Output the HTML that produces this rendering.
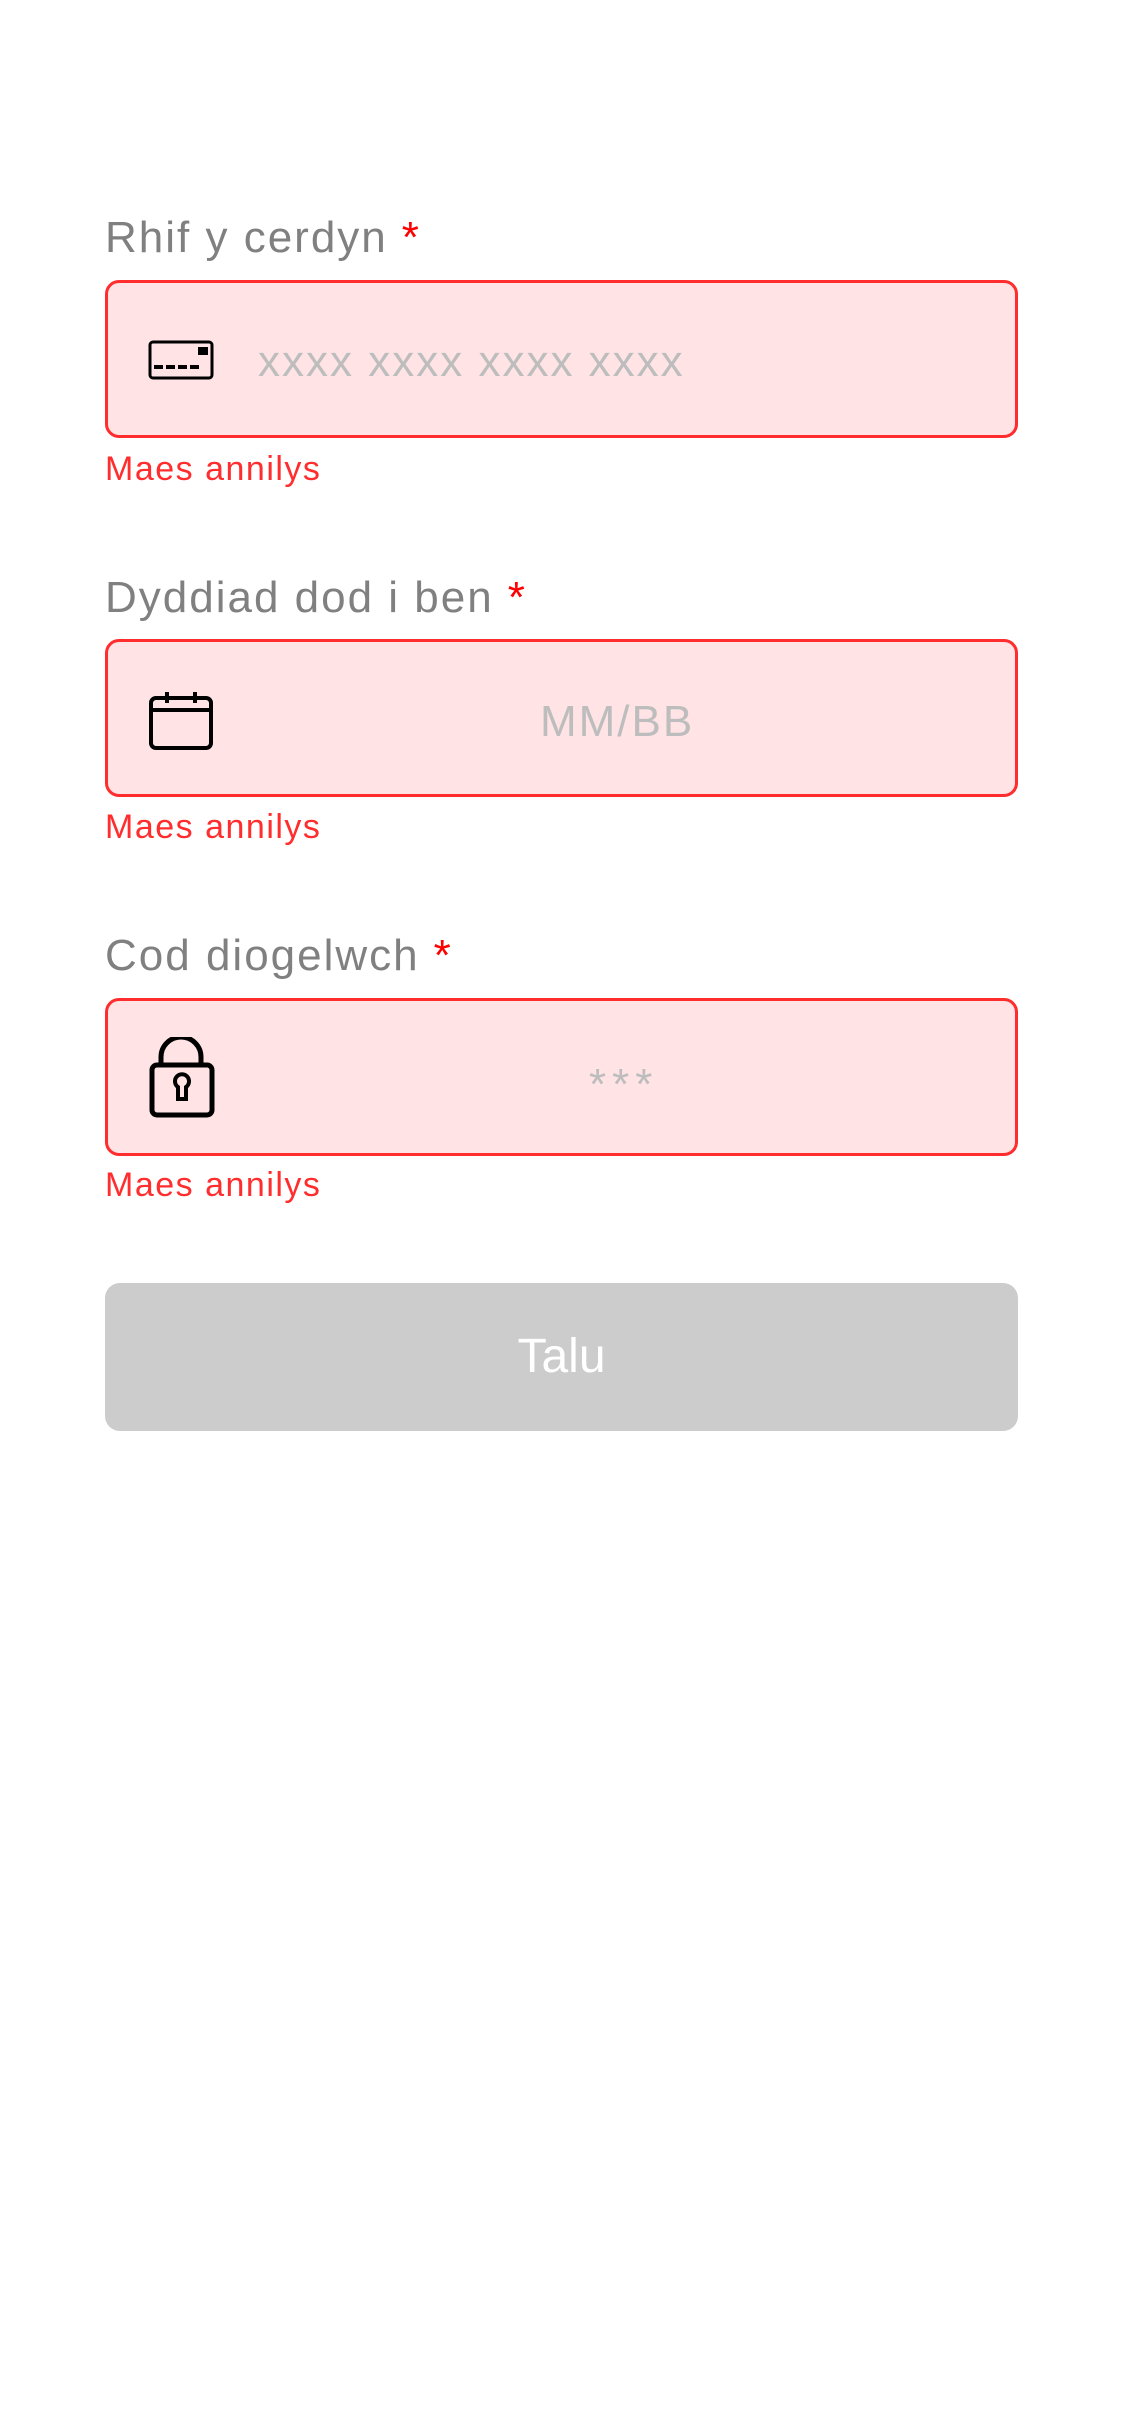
<!DOCTYPE html>
<html><head><meta charset="utf-8"><style>
body{margin:0;width:1125px;height:2436px;background:#fff;font-family:"Liberation Sans",sans-serif;position:relative;overflow:hidden}
.lbl{position:absolute;left:105px;font-size:44px;letter-spacing:2px;color:#808080;line-height:1}
.lbl span{color:#f00;margin-left:14px}
.box{position:absolute;left:105px;width:913px;height:158px;border:3px solid #ff2d2d;border-radius:14px;background:#ffe3e5;box-sizing:border-box}
.ph{position:absolute;font-size:44px;letter-spacing:2px;color:#bdbdbd;line-height:1}
.err{position:absolute;left:105px;font-size:34px;letter-spacing:1.5px;color:#ff2d2d;line-height:1}
.ic{position:absolute;left:40px}
.btn{position:absolute;left:105px;top:1283px;width:913px;height:148px;background:#cccccc;border-radius:15px;color:#fff;font-size:48px;text-align:center;line-height:148px}
</style></head><body>
<div class="lbl" style="top:216px">Rhif y cerdyn<span>*</span></div>
<div class="box" style="top:280px">
<svg class="ic" style="top:57px" width="66" height="40" viewBox="0 0 66 40"><rect x="2" y="2" width="62" height="36" rx="3" fill="none" stroke="#000" stroke-width="3"/><rect x="50" y="7" width="10" height="8" fill="#000"/><g fill="#000"><rect x="6" y="25" width="9" height="4"/><rect x="18" y="25" width="9" height="4"/><rect x="30" y="25" width="9" height="4"/><rect x="42" y="25" width="9" height="4"/></g></svg>
<div class="ph" style="left:150px;top:57px">xxxx xxxx xxxx xxxx</div>
</div>
<div class="err" style="top:452px">Maes annilys</div>

<div class="lbl" style="top:576px">Dyddiad dod i ben<span>*</span></div>
<div class="box" style="top:639px">
<svg class="ic" style="top:48px" width="66" height="62" viewBox="0 0 66 62"><rect x="3" y="8" width="60" height="50" rx="5" fill="none" stroke="#000" stroke-width="4"/><line x1="3" y1="20" x2="63" y2="20" stroke="#000" stroke-width="4"/><line x1="19" y1="2" x2="19" y2="13" stroke="#000" stroke-width="4"/><line x1="47" y1="2" x2="47" y2="13" stroke="#000" stroke-width="4"/></svg>
<div class="ph" style="left:432px;top:58px">MM/BB</div>
</div>
<div class="err" style="top:810px">Maes annilys</div>

<div class="lbl" style="top:934px">Cod diogelwch<span>*</span></div>
<div class="box" style="top:998px">
<svg class="ic" style="top:36px" width="68" height="82" viewBox="0 0 68 82"><path d="M13 28 V20 A20 20 0 0 1 53 20 V28" fill="none" stroke="#000" stroke-width="5"/><rect x="4" y="28" width="60" height="50" rx="5" fill="none" stroke="#000" stroke-width="5"/><path d="M30 62 V50 A7 7 0 1 1 38 50 V62 Z" fill="none" stroke="#000" stroke-width="4"/></svg>
<div class="ph" style="left:481px;top:62px;letter-spacing:6px">***</div>
</div>
<div class="err" style="top:1168px">Maes annilys</div>

<div class="btn">Talu</div>
</body></html>
